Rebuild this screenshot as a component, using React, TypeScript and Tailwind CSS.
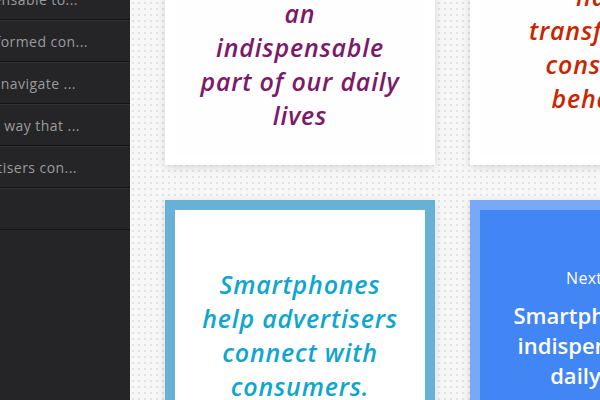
import React from 'react'

const font = { fontFamily: '"Open Sans", "Liberation Sans", sans-serif' }

const menu = [
  { text: 'Smartphones are indispensable to...', pad: 'pr-[52px]' },
  { text: 'Smartphones have transformed con...', pad: 'pr-[42px]' },
  { text: 'Smartphones help consumers navigate ...', pad: 'pr-[54px]' },
  { text: 'Smartphones have changed the way that ...', pad: 'pr-[50px]' },
  { text: 'Smartphones help advertisers con...', pad: 'pr-[53px]' },
  { text: '', pad: 'pr-[50px]' },
]

function Sidebar() {
  return (
    <aside className="w-[130px] shrink-0 h-full bg-[#252527] overflow-hidden">
      <div className="-mt-[22px]">
        {menu.map((item, i) => (
          <div
            key={i}
            className={`h-[42px] flex items-center justify-end overflow-hidden border-t border-t-[#313133] border-b border-b-[#141415] ${item.pad}`}
          >
            <span className="whitespace-nowrap text-[14px] tracking-[0.45px] text-[#9b9b9d]">{item.text}</span>
          </div>
        ))}
      </div>
    </aside>
  )
}

function Card({ border, bg, children }: { border: string; bg: string; children: React.ReactNode }) {
  return (
    <div className={`w-[270px] h-[270px] border-[10px] ${border} ${bg} shadow-[0_2px_8px_rgba(0,0,0,0.13)] flex flex-col items-center justify-center text-center`}>
      {children}
    </div>
  )
}

function Quote({ lines, color }: { lines: string[]; color: string }) {
  return (
    <div className={`italic font-semibold text-[25px] leading-[34px] tracking-[0.8px] ${color}`}>
      {lines.map((l) => (
        <div key={l} className="whitespace-nowrap">{l}</div>
      ))}
    </div>
  )
}

export default function App() {
  return (
    <div className="w-[600px] h-[400px] flex overflow-hidden" style={font}>
      <Sidebar />
      <main className="flex-1 h-full overflow-hidden bg-[#f7f7f7] bg-[radial-gradient(circle,#e3e3e3_1px,transparent_1.3px)] bg-[length:6px_6px]">
        <div className="grid grid-cols-[270px_270px] gap-[35px] pl-[35px] -mt-[105px]">
          <Card border="border-white" bg="bg-[#fefefe]">
            <Quote
              color="text-[#7c1a67]"
              lines={['Smartphones', 'have become', 'an', 'indispensable', 'part of our daily', 'lives']}
            />
          </Card>
          <Card border="border-white" bg="bg-[#fefefe]">
            <Quote
              color="text-[#c92500]"
              lines={['Smartphones', 'have', 'transformed', 'consumer', 'behavior']}
            />
          </Card>
          <Card border="border-[#67b1d6]" bg="bg-white">
            <Quote
              color="text-[#0ea6cf]"
              lines={['Smartphones', 'help advertisers', 'connect with', 'consumers.']}
            />
          </Card>
          <Card border="border-[#77a9f6]" bg="bg-[#4285f4]">
            <div className="text-white pb-[14px]">
              <div className="text-[16px] leading-[24px] mb-[10px] tracking-[0.3px]">Next Slide</div>
              <div className="text-[22px] leading-[30px] font-semibold">
                <div>Smartphones are</div>
                <div>indispensable to</div>
                <div>daily lives.</div>
              </div>
            </div>
          </Card>
        </div>
      </main>
    </div>
  )
}
